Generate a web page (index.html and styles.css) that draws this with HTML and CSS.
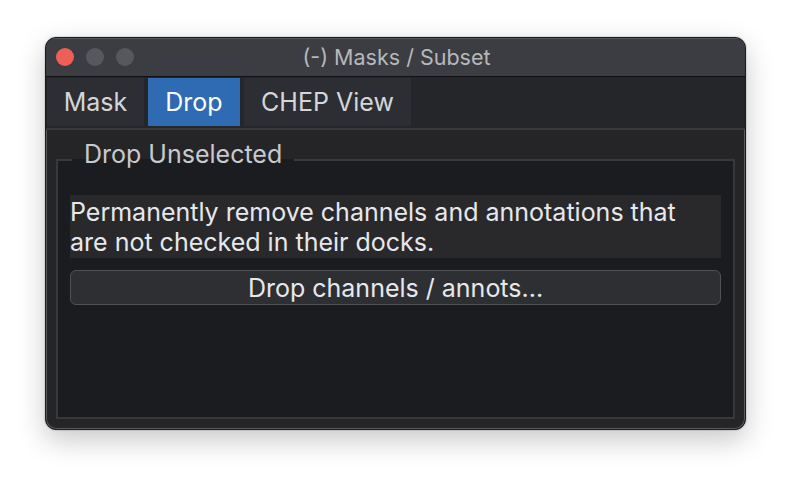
FILE: index.html
```html
<!DOCTYPE html>
<html>
<head>
<meta charset="utf-8">
<link rel="stylesheet" href="styles.css">
</head>
<body>
<div class="window">
  <div class="titlebar">
    <div class="lights">
      <span class="light red"></span>
      <span class="light gray"></span>
      <span class="light gray"></span>
    </div>
    <div class="title">(-) Masks / Subset</div>
  </div>
  <div class="tabbar">
    <div class="tab">Mask</div>
    <div class="tab active">Drop</div>
    <div class="tab">CHEP View</div>
  </div>
  <div class="content">
    <fieldset class="group">
      <legend class="group-title">Drop Unselected</legend>
      <div class="label">Permanently remove channels and annotations that are not checked in their docks.</div>
      <button class="btn">Drop channels / annots...</button>
    </fieldset>
  </div>
</div>
</body>
</html>
```
FILE: styles.css
```css
html, body {
  margin: 0;
  padding: 0;
  background: #ffffff;
}
body {
  width: 792px;
  height: 484px;
  overflow: hidden;
  font-family: Inter, "Noto Sans", sans-serif;
}
.window {
  margin: 37px 0 0 45px;
  width: 699px;
  height: 391px;
  border: 1px solid #18191b;
  border-radius: 11px;
  box-shadow: inset 0 0 0 1px #5a5b5f, 0 10px 28px rgba(0,0,0,0.22), 0 0 2px rgba(0,0,0,0.3);
  background: #252528;
  overflow: hidden;
  display: flex;
  flex-direction: column;
}
.titlebar {
  height: 38px;
  background: #3b3d42;
  border-bottom: 1px solid #111113;
  display: flex;
  align-items: center;
  position: relative;
  box-shadow: inset 0 1px 0 #55575b;
}
.lights {
  display: flex;
  gap: 12px;
  padding-left: 10px;
}
.light {
  width: 18px;
  height: 18px;
  border-radius: 50%;
  display: block;
}
.red { background: #ee5f57; }
.gray { background: #56585d; }
.title {
  position: absolute;
  left: 0;
  right: 0;
  text-align: center;
  color: #b6b8bc;
  font-size: 21.5px;
  padding-left: 2px;
}
.tabbar {
  background: #252629;
  border-bottom: 2px solid #38393d;
  display: flex;
  gap: 4px;
  padding: 1px 0 0 1px;
  box-sizing: border-box;
  height: 53px;
}
.tab {
  height: 48px;
  background: #2c2e33;
  color: #d4d6da;
  font-size: 25px;
  display: flex;
  align-items: center;
  justify-content: center;
  box-sizing: border-box;
}
.tab:first-child { width: 97px; }
.tab.active {
  background: #2e6bb2;
  color: #ffffff;
  width: 92px;
}
.tab:last-child { width: 167px; }
.content {
  flex: 1;
  padding: 11px 10px 10px 10px;
  display: flex;
}
.group {
  flex: 1;
  margin: 0;
  padding: 16px 12px 0 12px;
  border: 2px solid #38393a;
  background: #1b1c1f;
  display: flex;
  flex-direction: column;
  gap: 12px;
  min-width: 0;
}
.group-title {
  color: #c8cace;
  font-size: 25px;
  padding: 0 12px 12px 12px;
  margin-left: 2px;
  line-height: 26px;
}
.label {
  background: #29292c;
  color: #e7e8eb;
  font-size: 25px;
  line-height: 30px;
  padding: 2px 2px 1px 0;
}
.btn {
  height: 35px;
  border: 1.5px solid #4f5156;
  border-radius: 6px;
  background: #2d2f33;
  color: #e7e8eb;
  font-family: Inter, "Noto Sans", sans-serif;
  font-size: 25px;
  padding: 0;
}
```
